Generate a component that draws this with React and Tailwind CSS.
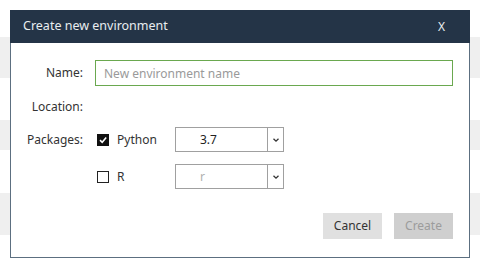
import React, { useState } from 'react';

function Caret() {
  return (
    <svg width="8" height="6" viewBox="0 0 8 6" className="text-[#333]">
      <path d="M1.5 1.8 L4 4.2 L6.5 1.8" fill="none" stroke="currentColor" strokeWidth="1.3" />
    </svg>
  );
}

function Select({ value, muted }) {
  return (
    <div className="flex h-[25px] w-[109px] border border-[#a0a0a0] bg-white">
      <div className={`flex-1 flex items-center pl-[24px] text-[12px] ${muted ? 'text-[#b0b0b0]' : 'text-[#222]'}`}>
        {value}
      </div>
      <div className="w-[16px] border-l border-[#a0a0a0] flex items-center justify-center">
        <Caret />
      </div>
    </div>
  );
}

function Checkbox({ checked }) {
  return checked ? (
    <div className="w-[12px] h-[12px] bg-[#111] flex items-center justify-center">
      <svg width="10" height="10" viewBox="0 0 10 10">
        <path d="M2 5.2 L4.2 7.3 L8.2 2.6" fill="none" stroke="white" strokeWidth="1.6" />
      </svg>
    </div>
  ) : (
    <div className="w-[12px] h-[12px] border-[1.5px] border-[#222] bg-white" />
  );
}

export default function App() {
  const [name, setName] = useState('');

  return (
    <div className="relative w-[480px] h-[267px] bg-white overflow-hidden" style={{ fontFamily: '"Noto Sans", "Open Sans", sans-serif' }}>
      {/* table rows behind the modal */}
      <div className="flex flex-col">
        <div className="h-[37px]" />
        <div className="h-[41px] bg-[#efefef]" />
        <div className="h-[42px]" />
        <div className="h-[30px] bg-[#efefef]" />
        <div className="h-[43px]" />
        <div className="h-[42px] bg-[#efefef]" />
      </div>

      <div className="absolute left-[10px] top-[10px] w-[460px] h-[248px] border border-[#5c6f80] bg-white flex flex-col">
        <div className="h-[33px] -mx-px -mt-px bg-[#243447] flex items-center justify-between pl-[13px] pr-[25px] text-[#e9edf0] text-[12.5px]">
          <span>Create new environment</span>
          <span className="text-[12px]">X</span>
        </div>

        <div className="flex flex-col text-[12px] text-[#333]">
          <div className="flex items-center mt-[17px] h-[26px]">
            <span className="w-[72px] text-right">Name:</span>
            <input
              autoFocus
              value={name}
              onChange={(e) => setName(e.target.value)}
              placeholder="New environment name"
              className="ml-[12px] w-[358px] h-[26px] border border-[#6aa84f] px-[8px] text-[12px] outline-none caret-black placeholder:text-[#9a9a9a]"
            />
          </div>

          <div className="flex items-center mt-[9px] h-[24px]">
            <span className="w-[72px] text-right">Location:</span>
          </div>

          <div className="flex items-center mt-[8px] h-[25px]">
            <span className="w-[72px] text-right">Packages:</span>
            <div className="ml-[14px] w-[78px] flex items-center gap-[8px]">
              <Checkbox checked />
              <span>Python</span>
            </div>
            <Select value="3.7" />
          </div>

          <div className="flex items-center mt-[12px] h-[25px]">
            <span className="w-[72px]" />
            <div className="ml-[14px] w-[78px] flex items-center gap-[8px]">
              <Checkbox />
              <span>R</span>
            </div>
            <Select value="r" muted />
          </div>

          <div className="flex justify-end gap-[12px] mt-[24px] pr-[16px]">
            <button className="w-[59px] h-[26px] bg-[#e0e0e0] text-[#333] text-[12px]">Cancel</button>
            <button disabled className="w-[59px] h-[26px] bg-[#cfcfcf] text-[#9c9c9c] text-[12px]">Create</button>
          </div>
        </div>
      </div>
    </div>
  );
}
